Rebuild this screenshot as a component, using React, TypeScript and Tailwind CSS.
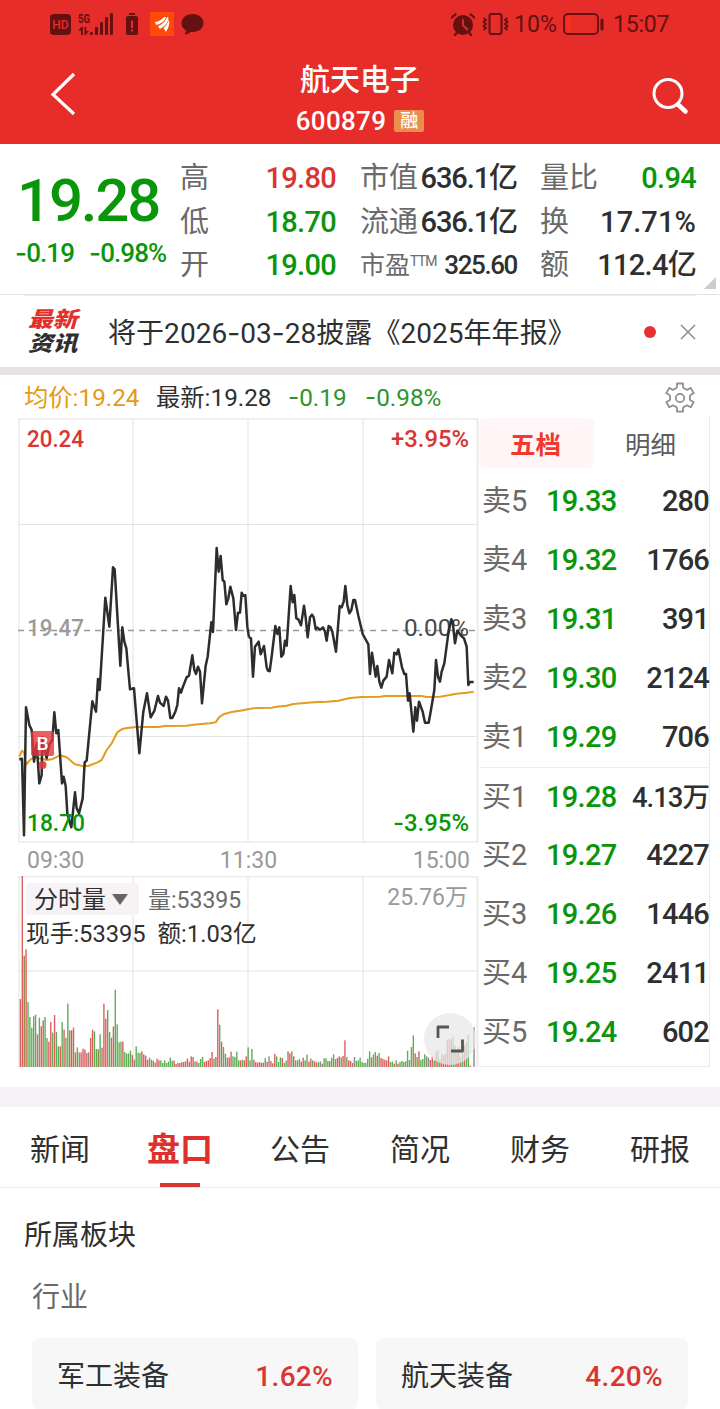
import type { ReactNode } from "react";

type Tone = "up" | "down" | "plain";

const TONES: Record<Tone, string> = {
  up: "text-[#d93532]",
  down: "text-[#0a960a]",
  plain: "text-[#2f2f2f]",
};

type Stat = { label: ReactNode; value: string; tone: Tone; spacing?: string; small?: boolean };

const STATS: { className: string; items: Stat[] }[] = [
  {
    className: "w-[156px]",
    items: [
      { label: "高", value: "19.80", tone: "up" },
      { label: "低", value: "18.70", tone: "down" },
      { label: "开", value: "19.00", tone: "down" },
    ],
  },
  {
    className: "ml-[24px] w-[157px]",
    items: [
      { label: "市值", value: "636.1亿", tone: "plain", spacing: "tracking-[-1.1px]" },
      { label: "流通", value: "636.1亿", tone: "plain", spacing: "tracking-[-1.1px]" },
      { label: "市盈", value: "325.60", tone: "plain", spacing: "tracking-[-1.4px]", small: true },
    ],
  },
  {
    className: "ml-[23px] w-[156px]",
    items: [
      { label: "量比", value: "0.94", tone: "down" },
      { label: "换", value: "17.71%", tone: "plain", spacing: "tracking-[0.1px]" },
      { label: "额", value: "112.4亿", tone: "plain" },
    ],
  },
];

const ORDERS = [
  { label: "卖5", price: "19.33", amount: "280" },
  { label: "卖4", price: "19.32", amount: "1766" },
  { label: "卖3", price: "19.31", amount: "391" },
  { label: "卖2", price: "19.30", amount: "2124" },
  { label: "卖1", price: "19.29", amount: "706" },
  { label: "买1", price: "19.28", amount: "4.13万" },
  { label: "买2", price: "19.27", amount: "4227" },
  { label: "买3", price: "19.26", amount: "1446" },
  { label: "买4", price: "19.25", amount: "2411" },
  { label: "买5", price: "19.24", amount: "602" },
];

const TABS = ["新闻", "盘口", "公告", "简况", "财务", "研报"];

const SECTORS = [
  { name: "军工装备", change: "1.62%", className: "w-[326px]" },
  { name: "航天装备", change: "4.20%", className: "ml-[18px] w-[312px]" },
];

// Price line, three units per pixel, one string per session
const PRICE_AM =
  "28,688 36,686 42,916 48,532 58,585 65,600 72,695 80,640 88,760 95,735 97,620 104,660 110,685 117,645 127,630 133,547 139,610 145,600 156,760 161,740 167,768 172,850 184,892 195,787 200,835 207,850 218,805 224,697 230,692 247,514 258,545 264,447 269,480 286,203 298,290 309,112 314,118 331,407 337,292 343,335 349,355 360,478 372,475 388,670 400,545 411,490 422,562 433,543 444,498 450,518 461,528 468,500 474,512 481,564 487,564 496,545 502,525 507,475 513,488 519,470 530,442 537,437 547,376 553,420 558,432 564,410 570,425 576,520 587,407 593,380 604,277 609,306 620,54 626,125 632,78 638,150 643,155 649,223 655,205 661,170 670,205 678,300 684,248 690,248 695,188 700,198 706,195 712,290 717,322";
const PRICE_PM =
  "27,322 33,325 39,440 45,350 56,335 62,373 72,348 80,412 84,422 89,424 95,380 106,288 112,312 118,292 124,380 130,372 135,332 140,347 152,168 158,217 163,195 169,265 175,268 183,286 192,227 197,262 203,322 210,262 216,254 221,262 227,297 232,293 238,298 244,297 249,292 255,305 260,332 266,288 272,292 277,305 288,365 299,228 305,232 311,215 316,168 322,225 328,250 334,240 340,210 345,210 355,257 368,312 385,343 390,432 396,368 407,440 412,408 418,455 424,473 430,452 440,440 447,390 457,430 463,368 470,373 475,358 486,412 493,432 498,432 504,512 509,490 520,605 526,532 531,572 537,515 548,545 555,578 566,578 572,545 583,480 588,390 594,440 600,455 605,425 613,400 625,310 634,268 638,275 645,340 652,302 664,318 672,325 680,350 685,465 690,456 701,456";
const AVG_AM =
  "28,680 36,662 42,668 48,705 60,690 72,682 110,690 125,688 150,676 170,682 195,703 215,707 235,708 262,697 275,690 290,660 305,640 322,607 335,598 350,594 380,591 445,591 465,588 530,587 550,584 600,580 617,577 627,562 640,553 665,546 690,542 717,537";
const AVG_PM =
  "27,537 50,534 95,533 110,530 140,527 160,522 220,517 260,515 295,512 330,504 365,501 420,500 435,498 545,498 560,501 600,500 625,496 650,491 680,488 701,485";

// One bar per minute: colour letter and height
const VOLUME =
  "r204 r575 o334 r353 g195 g150 g118 g152 k157 r98 g148 r122 r140 g150 g87 r76 r135 g103 r156 g105 g62 r62 g135 r112 g88 g190 r110 o110 r118 r44 g59 g44 r44 r55 r52 r42 k44 r87 r112 g107 g54 o53 g98 r58 r190 r145 g171 g105 r88 r122 g232 g128 g74 g76 r76 g45 g40 g41 g49 r36 k22 g62 g43 g42 r47 r38 r34 r22 g28 g22 r19 k13 r25 r20 g20 g12 g20 g12 g16 g28 g19 r19 r9 r12 r12 g15 r15 r17 r25 k16 r32 r30 g17 r16 g12 g24 g30 r15 r18 r20 r27 r45 g25 r30 r173 g127 r76 g60 k40 g28 r29 r46 g32 g30 g46 g20 r20 g22 r20 r32 g59 k20 g54 r22 r15 r13 r15 r13 r13 g27 r16 k32 r18 r11 r39 g32 g15 g29 r27 g12 g19 r47 r41 g47 r32 g20 k20 g24 r16 r28 g20 g37 r16 r25 g20 r17 r14 g14 k17 r10 g26 g26 g18 r18 g28 g38 g24 r27 r32 g29 r33 r80 g30 r20 r18 r12 k30 g18 g20 g28 g15 g12 g13 g25 g47 r29 g38 g45 r34 g42 r27 r24 r22 r20 r32 g15 g16 r10 g20 r10 g15 g18 k15 g17 g49 k21 g60 g95 r41 g30 r47 g21 g24 g38 k32 k28 r21 r32 g20 r45 g50 r22 r38 r35 r40 r82 r85 r84 g92 g65 r50 r60 k30 g50 r65 g74 g96 r4 r0 k119";

const BAR_FILL: Record<string, string> = {
  r: "#d9605e",
  g: "#5fae55",
  o: "#8a8432",
  k: "#8b8b8b",
};

function Minus() {
  return <span className="font-[Inter]">-</span>;
}

function StatusBar() {
  return (
    <div className="flex h-[48px] items-center justify-between pl-[50px] pr-[50px] text-[#651011]">
      <div className="flex items-center">
        <svg width="21" height="21" viewBox="0 0 21 21">
          <rect width="21" height="21" rx="4" fill="currentColor" />
          <text x="10.5" y="15" fontSize="12" fontWeight="500" textAnchor="middle" fill="#e62d2a" className="font-[Roboto]">
            HD
          </text>
        </svg>
        <svg className="ml-[7px]" width="36" height="24" viewBox="0 0 36 24" fill="currentColor">
          <text x="0" y="10.500" fontSize="12.5" fontWeight="700" textLength="12" lengthAdjust="spacingAndGlyphs" className="font-[Roboto]">
            5G
          </text>
          <path d="M0 18.500 3.500 15H5v8H3v-4.500ZM6.500 15h1.800v4l2.700 0-3.500 4h-1Z" />
          <rect x="12" y="20" width="3" height="3" rx="1" />
          <rect x="17" y="15" width="3" height="8" rx="1" />
          <rect x="22" y="10" width="3" height="13" rx="1" />
          <rect x="27" y="5" width="3" height="18" rx="1" />
          <rect x="32" y="1" width="3" height="22" rx="1" />
        </svg>
        <svg className="ml-[12px]" width="12" height="22" viewBox="0 0 12 22">
          <path d="M3 0h6v2H3zM2 3h8a2 2 0 0 1 2 2v15a2 2 0 0 1-2 2H2a2 2 0 0 1-2-2V5a2 2 0 0 1 2-2z" fill="currentColor" />
          <path d="M5 7.500h2V15H5zM5 16.500h2v2H5z" fill="#e62d2a" />
        </svg>
        <svg className="ml-[12px]" width="24" height="24" viewBox="0 0 24 24">
          <rect width="24" height="24" fill="#ff4a0a" />
          <path d="M5 10c4-.5 6-2 9-5h2C15 9 11 12 6 13zM8 14c4-1.500 7-4 9-9l1.500 1C18 11 15 14 10 17zM13.500 16c2.500-2 4.500-5 5.500-8.500C20 12 18.500 16 16 20z" fill="#fff" />
        </svg>
        <svg className="ml-[7px]" width="23" height="21" viewBox="0 0 23 21">
          <path d="M11.500 0C5 0 .5 4 .5 9c0 3.500 2 6 4.500 7.500-.2 1.500-.8 3-1.500 4 2.500-.2 4.500-1 6-2.500h2C18 18 22.500 14 22.500 9S18 0 11.500 0z" fill="currentColor" />
        </svg>
      </div>
      <div className="flex items-center">
        <svg width="24" height="23" viewBox="0 0 24 23">
          <circle cx="12" cy="12" r="10" fill="currentColor" />
          <path d="M1 4.500a8 8 0 0 1 3.500-3M19.500 1.500a8 8 0 0 1 3.500 3M4 22l2-2.500M20 22l-2-2.500" stroke="currentColor" strokeWidth="2.200" fill="none" strokeLinecap="round" />
          <path d="M12 7v5.500l4.500 4" stroke="#e62d2a" strokeWidth="1.800" fill="none" strokeLinecap="round" />
        </svg>
        <svg className="ml-[7px]" width="27" height="22" viewBox="0 0 27 22" fill="none" stroke="currentColor">
          <rect x="7.500" y="1" width="12" height="20" rx="2" strokeWidth="2" />
          <path d="M1.500 5l2.500 2-2.500 2L4 11l-2.500 2L4 15l-2.500 2M25.500 5L23 7l2.500 2-2.500 2 2.500 2-2.500 2 2.500 2" strokeWidth="1.800" />
        </svg>
        <span className="ml-[5px] mt-[2px] w-[44px] text-[23px] leading-[24px] tracking-[0.1px]">10%</span>
        <svg className="ml-[5px]" width="41" height="22" viewBox="0 0 41 22">
          <rect x="1" y="1" width="34" height="20" rx="4" fill="none" stroke="currentColor" strokeWidth="1.800" />
          <rect x="4" y="4" width="4" height="14" rx="1" fill="#ff2d1e" />
          <path d="M39 7v9" stroke="currentColor" strokeWidth="3" strokeLinecap="round" />
        </svg>
        <span className="ml-[9px] mt-[2px] w-[57px] text-[23px] leading-[24px] tracking-[-0.2px]">15:07</span>
      </div>
    </div>
  );
}

function Header() {
  return (
    <header className="h-[144px] bg-[#e62d2a]">
      <StatusBar />
      <div className="flex h-[96px] justify-between text-white">
        <svg className="ml-[50px] mt-[24px]" width="27" height="45" viewBox="0 0 27 45">
          <path d="M24 2 3 22.500 24 42" fill="none" stroke="#fff" strokeWidth="3.200" />
        </svg>
        <div className="mr-[9px] flex flex-col items-center">
          <h1 className="mt-[12px] h-[40px] text-[30px] font-medium leading-[40px]">航天电子</h1>
          <div className="flex h-[42px] items-center">
            <span className="text-[26px] font-medium leading-[30px] tracking-[0.3px]">600879</span>
            <span className="ml-[8px] flex h-[22px] w-[30px] items-center justify-center rounded-[2px] bg-[#ea8f4b] text-[18px] font-medium leading-[22px]">融</span>
          </div>
        </div>
        <svg className="mr-[31px] mt-[29px]" width="37" height="38" viewBox="0 0 37 38" fill="none" stroke="#fff" strokeLinecap="round">
          <circle cx="16" cy="16.500" r="14" strokeWidth="3" />
          <path d="M26 27.500l7.500 7" strokeWidth="4.500" />
        </svg>
      </div>
    </header>
  );
}

function QuotePanel() {
  return (
    <section className="flex h-[151px] border-b border-[#e2e2e2]">
      <div className="w-[180px] pt-[22px] text-[#0a960a]">
        <p className="h-[70px] pl-[17px] text-[60px] font-medium leading-[70px] tracking-[-2.2px]">19.28</p>
        <p className="flex h-[34px] pl-[15px] text-[26px] font-medium leading-[34px] tracking-[-0.9px]">
          <span className="w-[74px] whitespace-nowrap">
            <Minus />
            0.19
          </span>
          <span className="whitespace-nowrap">
            <Minus />
            0.98%
          </span>
        </p>
      </div>
      {STATS.map((column, i) => (
        <dl key={i} className={`pt-[13px] ${column.className}`}>
          {column.items.map((stat) => (
            <div key={stat.value + stat.tone + String(stat.label)} className="flex h-[43.5px] items-center justify-between whitespace-nowrap">
              <dt className={`flex text-[#6a6a6a] ${stat.small ? "text-[25px]" : "text-[29px]"}`}>
                {stat.label}
                {stat.small && <sup className="top-0 pt-[7px] text-[14px] leading-[14px] tracking-[-0.8px]">TTM</sup>}
              </dt>
              <dd className={`font-medium ${TONES[stat.tone]} ${stat.small ? "text-[26px]" : "text-[29px]"} ${stat.spacing ?? "tracking-[-0.7px]"}`}>
                {stat.value}
              </dd>
            </div>
          ))}
        </dl>
      ))}
      <svg className="ml-[8px] mt-[133px] shrink-0" width="12" height="12" viewBox="0 0 12 12">
        <path d="M12 0v12H0z" fill="#ccc" />
      </svg>
    </section>
  );
}

function NewsBar() {
  return (
    <section className="mx-[24px] flex h-[72px] items-center border-t border-[#eee]">
      <div className="ml-[4px] flex w-[55px] shrink-0 flex-col gap-[3px] text-[21.500px] font-black italic leading-[21px]">
        <p className="h-[21px] w-[44px] origin-left scale-x-115 overflow-visible text-[#e2302d]">最新</p>
        <p className="h-[21px] w-[44px] origin-left scale-x-115 overflow-visible text-[#2f2f2f]">资讯</p>
      </div>
      <p className="ml-[25px] mt-[4px] w-[500px] shrink-0 whitespace-nowrap text-[28px] leading-[40px] tracking-[0.05px] text-[#2f2f2f]">
        将于2026<Minus />03<Minus />28披露《2025年年报》
      </p>
      <span className="ml-[36px] size-[12px] shrink-0 rounded-full bg-[#e83030]" />
      <svg className="ml-[24px] shrink-0" width="16" height="16" viewBox="0 0 16 16">
        <path d="M1 1l14 14M15 1 1 15" stroke="#8c8c8c" strokeWidth="1.500" />
      </svg>
    </section>
  );
}

function ChartLegend() {
  return (
    <div className="flex h-[42px] items-center whitespace-nowrap pl-[24px] pr-[24px] pt-[3px] text-[24.300px] leading-[39px]">
      <span className="w-[132px] text-[#e69a14]">均价:19.24</span>
      <span className="w-[132px] text-[#2f2f2f]">最新:19.28</span>
      <span className="w-[77px] text-[#2f942a]">
        <Minus />
        0.19
      </span>
      <span className="text-[#2f942a]">
        <Minus />
        0.98%
      </span>
      <svg className="ml-auto" width="32" height="32" viewBox="0 0 32 32" fill="none" stroke="#8f8f8f" strokeWidth="1.800" strokeLinejoin="round">
        <path d="M13 1.500h6v3.300q0 1 1 1.500l2 1.100q1 .6 1.900.1l2.800-1.600 3 5.200-2.900 1.600q-.9.500-.9 1.600v2.600q0 1.100.9 1.600l2.900 1.600-3 5.200-2.800-1.600q-.9-.5-1.900.1l-2 1.100q-1 .5-1 1.500v3.300h-6v-3.300q0-1-1-1.500l-2-1.100q-1-.6-1.900-.1l-2.800 1.600-3-5.200 2.900-1.600q.9-.5.9-1.600v-2.600q0-1.100-.9-1.600l-2.900-1.600 3-5.200 2.800 1.600q.9.500 1.900-.1l2-1.100q1-.5 1-1.500z" />
        <circle cx="16" cy="16" r="4.200" />
      </svg>
    </div>
  );
}

function PriceChart() {
  return (
    <svg className="block" width="461" height="425" viewBox="0 0 461 425">
      <g stroke="#ebebeb" strokeWidth="1.500" fill="none">
        <path d="M0 1h460M0 424h460M1 0v425M115 0v425M230 0v425M345 0v425" />
        <path d="M0 106.500h460M0 318.500h460" stroke="#e4e4e4" strokeWidth="1" />
        <path d="M459.500 0v425" strokeWidth="2" />
      </g>
      <path d="M0 212.500h460" stroke="#999" strokeWidth="1.500" strokeDasharray="6 5" />
      <g className="font-[Roboto]" fontSize="24">
        <text x="9" y="218" fill="#9b9b9b" fontWeight="500" textLength="57" lengthAdjust="spacingAndGlyphs">19.47</text>
        <text x="386" y="218" fill="#4a4a4a" textLength="65" lengthAdjust="spacingAndGlyphs">0.00%</text>
      </g>
      <g fill="none" strokeLinejoin="round" transform="scale(.33333)">
        <g stroke="#e39c1f" strokeWidth="6">
          <polyline points={AVG_AM} transform="translate(-24 336)" />
          <polyline points={AVG_PM} transform="translate(666 336)" />
        </g>
        <g stroke="#2d2d2d" strokeWidth="7.500">
          <polyline points={PRICE_AM} transform="translate(-24 336)" />
          <polyline points={PRICE_PM} transform="translate(666 336)" />
        </g>
      </g>
      <rect x="13" y="313" width="23" height="25" rx="2" fill="#e2363b" fillOpacity="0.800" />
      <circle cx="24.500" cy="347" r="4" fill="#e2363b" fillOpacity="0.900" />
      <text x="24.500" y="332" fontSize="19" fontWeight="500" textAnchor="middle" fill="#fff" className="font-[Roboto]">B</text>
      <g className="font-[Roboto]" fontSize="23.500" fontWeight="500">
        <text x="9" y="29" fill="#d93532" textLength="57" lengthAdjust="spacingAndGlyphs">20.24</text>
        <text x="373" y="29" fill="#d93532" textLength="78" lengthAdjust="spacingAndGlyphs">+3.95%</text>
        <text x="9" y="413" fill="#0a960a" textLength="58" lengthAdjust="spacingAndGlyphs">18.70</text>
        <text x="375" y="413" fill="#0a960a" textLength="76" lengthAdjust="spacingAndGlyphs">
          <tspan className="font-[Inter]">-</tspan>3.95%
        </text>
      </g>
    </svg>
  );
}

function VolumeBars() {
  return (
    <svg className="block" width="461" height="191" viewBox="0 0 461 191">
      <path d="M0 .8h460M0 95h460M1 0v191M115 0v191M230 0v191M345 0v191" stroke="#ebebeb" strokeWidth="1.500" />
      <path d="M459.500 0v191" stroke="#ebebeb" strokeWidth="2" />
      {VOLUME.split(" ").map((bar, i) => {
        const height = Number(bar.slice(1)) / 3;
        return <rect key={i} x={1.7 + i * 1.898} y={191 - height} width="1.400" height={height} fill={BAR_FILL[bar[0]]} />;
      })}
    </svg>
  );
}

function VolumeChart() {
  return (
    <div className="relative h-[191px]">
      <VolumeBars />
      <div className="absolute left-[8px] top-[7px] w-[442px] text-[23px] leading-[32px] text-[#2f2f2f]">
        <div className="flex h-[32px] items-center whitespace-nowrap">
          <span className="flex h-[32px] w-[113px] items-center rounded-[4px] bg-[#f6f2f6] pl-[8px] pt-[3px] text-[24px] leading-[29px]">
            分时量
            <svg className="mb-[3px] ml-[6px]" width="16" height="11" viewBox="0 0 16 11">
              <path d="M0 0h16L8 11z" fill="#666" />
            </svg>
          </span>
          <span className="ml-[9px] mt-[4px] text-[#6b6b6b]">量:53395</span>
          <span className="mb-[3px] ml-auto text-[#999]">25.76万</span>
        </div>
        <p className="mt-[3px] whitespace-pre text-[23.700px]">现手:53395  额:1.03亿</p>
      </div>
      <div className="absolute left-[406px] top-[137px] size-[52px] rounded-full bg-[#e8e8e8]/75">
        <svg width="52" height="52" viewBox="0 0 52 52" fill="none" stroke="#555" strokeWidth="2.800" strokeLinejoin="round">
          <path d="M14 25V14h11M38.500 26.500V38H27" />
        </svg>
      </div>
    </div>
  );
}

function OrderBook() {
  return (
    <div className="h-[650px] w-[231px] border-b border-r border-[#ebebeb]">
      <div className="flex h-[54.500px] text-[25.500px]">
        <span className="mt-[1px] h-[50px] w-[115px] rounded-[6px] bg-[#fff5f6] pr-[2px] text-center font-bold leading-[54px] text-[#f03a30]">五档</span>
        <span className="w-[115px] pr-[2px] text-center leading-[56px] text-[#5c5c5c]">明细</span>
      </div>
      {ORDERS.map((order, i) => (
        <div key={order.label} className={`flex h-[59px] items-center whitespace-nowrap pt-[2px] ${i === 5 ? "border-t border-[#eee]" : ""}`}>
          <span className="ml-[3px] w-[64px] text-[29px] text-[#6a6a6a]">{order.label}</span>
          <span className="text-[29px] font-medium tracking-[-0.7px] text-[#0a960a]">{order.price}</span>
          <span className={`ml-auto font-medium text-[#2f2f2f] ${i === 5 ? "text-[27.500px] tracking-[-1px]" : "text-[29px] tracking-[-0.8px]"}`}>
            {order.amount}
          </span>
        </div>
      ))}
    </div>
  );
}

export default function App() {
  return (
    <div className="h-[1409px] w-[720px] overflow-hidden bg-white font-[Roboto,'Noto_Sans_CJK_SC',sans-serif]">
      <Header />
      <QuotePanel />
      <NewsBar />
      <div className="h-[8px] bg-[#e5e1e5]" />
      <section className="h-[712px]">
        <ChartLegend />
        <div className="flex">
          <div className="ml-[18px] mt-[1px] w-[461px]">
            <PriceChart />
            <div className="flex h-[33px] items-center px-[9px] pt-[2px] text-[23px] leading-[31px] text-[#999]">
              <span className="flex-1">09:30</span>
              <span className="flex-1 text-center">11:30</span>
              <span className="flex-1 text-right">15:00</span>
            </div>
            <VolumeChart />
          </div>
          <OrderBook />
        </div>
      </section>
      <div className="h-[20px] bg-[#f7f2f6]" />
      <nav className="flex h-[81px] border-b border-[#e9e9e9]">
        {TABS.map((tab) => (
          <div
            key={tab}
            className={`flex w-[120px] flex-col items-center justify-between ${
              tab === "盘口" ? "text-[33px] font-bold text-[#e0302d]" : "text-[30px] text-[#2f2f2f]"
            }`}
          >
            <span className="h-[76px] leading-[85px]">{tab}</span>
            {tab === "盘口" && <span className="h-[4px] w-[40px] bg-[#d93532]" />}
          </div>
        ))}
      </nav>
      <section>
        <h2 className="mt-[26px] pl-[24px] text-[28px] leading-[44px] text-[#2f2f2f]">所属板块</h2>
        <h3 className="mt-[20px] pl-[32px] text-[28px] leading-[40px] text-[#6a6a6a]">行业</h3>
        <div className="mt-[20px] flex pl-[32px]">
          {SECTORS.map((sector) => (
            <div key={sector.name} className={`flex h-[72px] items-center justify-between rounded-[8px] bg-[#f7f7f7] px-[25px] pt-[5px] text-[28px] ${sector.className}`}>
              <span className="text-[#2f2f2f]">{sector.name}</span>
              <span className="text-[28px] font-medium tracking-[0.3px] text-[#d93532]">{sector.change}</span>
            </div>
          ))}
        </div>
      </section>
    </div>
  );
}
